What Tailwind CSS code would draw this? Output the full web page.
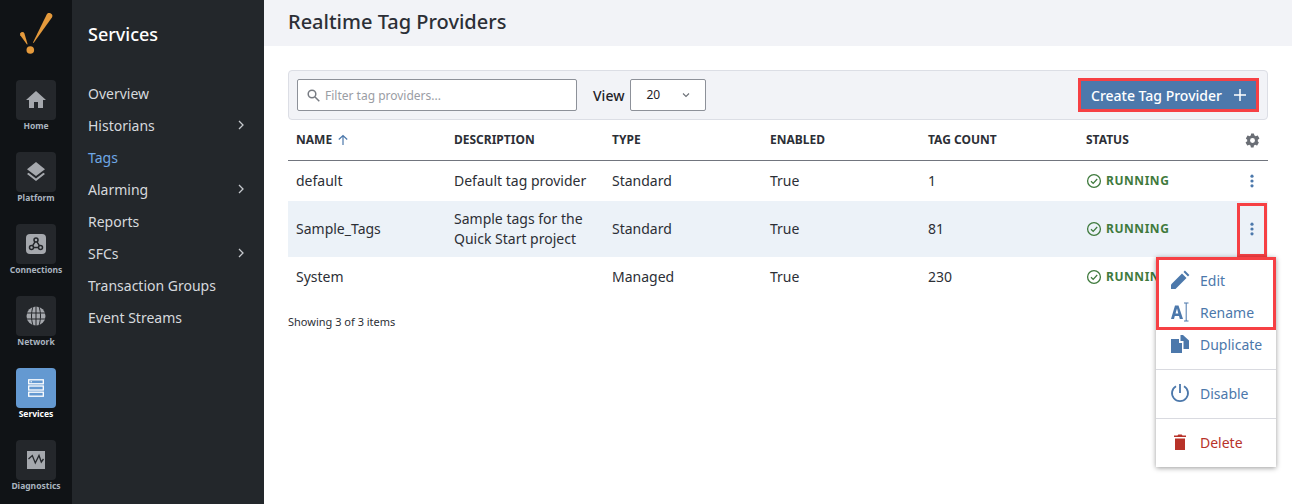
<!DOCTYPE html>
<html lang="en">
<head>
  <meta charset="UTF-8" />
  <title>Realtime Tag Providers</title>
  <script src="https://cdn.jsdelivr.net/npm/@tailwindcss/browser@4"></script>
</head>
<body class="w-[1292px] h-[504px] overflow-hidden bg-white font-['Noto_Sans',sans-serif] text-[14px] text-[#2c2f36]">
<div class="flex h-[504px]">

  <!-- Icon rail -->
  <nav class="w-[72px] shrink-0 bg-[#101316] flex flex-col items-center overflow-hidden">
    <svg class="mt-[13px] h-[42px] w-[36px] shrink-0" viewBox="0 0 36 42" fill="#e59a3c">
      <path d="M28.700 1.500A3 3 0 0 1 33.900 4.500L15.600 30 15 29.500z"/>
      <path d="M2.240 22.330A2.300 2.300 0 0 1 6.360 20.270L9.600 31.200 9 31.400z"/>
      <circle cx="12.300" cy="37" r="3.800"/>
    </svg>

    <div class="mt-[25px] flex h-10 w-10 items-center justify-center rounded-[4px] bg-[#24272b]">
      <svg class="h-6 w-6" viewBox="0 0 24 24" fill="#a5a8ad"><path d="M10 20v-6h4v6h5v-8h3L12 3 2 12h3v8z"/></svg>
    </div>
    <span class="-mt-[1px] h-[14px] text-[8.5px] leading-[14px] font-bold text-[#a9b3bf]">Home</span>

    <div class="mt-[19px] flex h-10 w-10 items-center justify-center rounded-[4px] bg-[#24272b]">
      <svg class="h-6 w-6" viewBox="0 0 24 24" fill="#a5a8ad"><path d="M12 2 3 9.200l9 6.900 9-6.900z"/><path d="m12 18.500-7.400-5.700L3 14l9 7 9-7-1.600-1.200z"/></svg>
    </div>
    <span class="-mt-[1px] h-[14px] text-[8.5px] leading-[14px] font-bold text-[#a9b3bf]">Platform</span>

    <div class="mt-[19px] flex h-10 w-10 items-center justify-center rounded-[4px] bg-[#24272b]">
      <svg class="h-[20px] w-[20px]" viewBox="0 0 20 20">
        <rect width="20" height="20" rx="4" fill="#a5a8ad"/>
        <g fill="none" stroke="#24272b" stroke-width="1.500"><circle cx="10" cy="6" r="2"/><circle cx="5.500" cy="13.500" r="2"/><circle cx="14.500" cy="13.500" r="2"/><path d="m9 7.800-2.500 4M11 7.800l2.500 4M7.500 13.500h5"/></g>
      </svg>
    </div>
    <span class="-mt-[1px] h-[14px] text-[8.5px] leading-[14px] font-bold text-[#a9b3bf]">Connections</span>

    <div class="mt-[19px] flex h-10 w-10 items-center justify-center rounded-[4px] bg-[#24272b]">
      <svg class="h-[20px] w-[20px]" viewBox="0 0 20 20" fill="none" stroke="#a5a8ad">
        <circle cx="10" cy="10" r="9.500" fill="#a5a8ad" stroke="none"/>
        <g stroke="#24272b" stroke-width="1"><path d="M1 7h18M1 13h18M7 .5C5 7 5 13 7 19.500M13 .5c2 6.500 2 12.500 0 19M10 0v20"/></g>
      </svg>
    </div>
    <span class="-mt-[1px] h-[14px] text-[8.5px] leading-[14px] font-bold text-[#a9b3bf]">Network</span>

    <div class="mt-[19px] flex h-10 w-10 items-center justify-center rounded-[4px] bg-[#6499d1]">
      <svg class="h-[18px] w-[16px]" viewBox="0 0 16 18" fill="none" stroke="#fff" stroke-width="1.300">
        <rect x=".7" y=".8" width="14.600" height="4"/><rect x=".7" y="7" width="14.600" height="4"/><rect x=".7" y="13.200" width="14.600" height="4"/>
        <path d="M2.500 2.800h1.500" stroke-width="1"/>
      </svg>
    </div>
    <span class="-mt-[1px] h-[14px] text-[8.5px] leading-[14px] font-bold text-white">Services</span>

    <div class="mt-[19px] flex h-10 w-10 shrink-0 items-center justify-center rounded-[4px] bg-[#24272b]">
      <svg class="h-[18px] w-[18px]" viewBox="0 0 18 18">
        <rect width="18" height="18" fill="#a5a8ad"/>
        <path d="M1.500 8 5.300 4.500 8.300 12 12 4.500 14.300 11 16.500 8" fill="none" stroke="#24272b" stroke-width="1.300"/>
      </svg>
    </div>
    <span class="-mt-[1px] h-[14px] text-[8.5px] leading-[14px] font-bold text-[#a9b3bf]">Diagnostics</span>
  </nav>

  <!-- Section menu -->
  <aside class="w-[192px] shrink-0 bg-[#23272b] pl-4 pr-[17px] text-[#d6d9dd]">
    <h2 class="mt-[21px] h-[26px] text-[18px] leading-[26px] font-medium text-white">Services</h2>
    <ul class="mt-[30px] flex flex-col">
      <li class="flex h-8 items-center">Overview</li>
      <li class="flex h-8 items-center justify-between">Historians
        <svg class="h-3 w-3" viewBox="0 0 12 12" fill="none" stroke="#c5c8cc" stroke-width="1.300"><path d="m4 2 4 4-4 4"/></svg>
      </li>
      <li class="flex h-8 items-center text-[#6ea8e6]">Tags</li>
      <li class="flex h-8 items-center justify-between">Alarming
        <svg class="h-3 w-3" viewBox="0 0 12 12" fill="none" stroke="#c5c8cc" stroke-width="1.300"><path d="m4 2 4 4-4 4"/></svg>
      </li>
      <li class="flex h-8 items-center">Reports</li>
      <li class="flex h-8 items-center justify-between">SFCs
        <svg class="h-3 w-3" viewBox="0 0 12 12" fill="none" stroke="#c5c8cc" stroke-width="1.300"><path d="m4 2 4 4-4 4"/></svg>
      </li>
      <li class="flex h-8 items-center">Transaction Groups</li>
      <li class="flex h-8 items-center">Event Streams</li>
    </ul>
  </aside>

  <!-- Main -->
  <main class="relative flex-1 min-w-0">
    <header class="flex h-[46px] items-center bg-[#f2f3f7] pl-6">
      <h1 class="text-[20px] leading-none font-medium text-[#2c2f36] -mt-[2px]">Realtime Tag Providers</h1>
    </header>

    <div class="mx-6 mt-[24px]">
      <!-- Toolbar -->
      <div class="flex h-[50px] items-center rounded-[4px] border border-[#dcdee5] bg-[#f2f3f7] pl-2 pr-2">
        <div class="flex h-[32px] w-[280px] items-center gap-[5px] rounded-[2px] border border-[#8d9199] bg-white pl-[9px]">
          <svg class="h-[13px] w-[13px]" viewBox="0 0 13 13" fill="none" stroke="#777b82" stroke-width="1.500"><circle cx="5" cy="5" r="3.800"/><path d="m8 8 4.300 4.300"/></svg>
          <span class="pt-[2px] text-[12px] text-[#9a9da4]">Filter tag providers...</span>
        </div>
        <span class="ml-4 text-[14px] font-medium text-[#1f2228]">View</span>
        <div class="ml-[6px] flex h-[32px] w-[76px] items-center justify-between rounded-[2px] border border-[#8d9199] bg-white pl-[15px] pr-[14px] text-[12px] text-[#1f2228]">
          20
          <svg class="h-[10px] w-[10px]" viewBox="0 0 10 10" fill="none" stroke="#6c7077" stroke-width="1.100"><path d="m2 3.500 3 3 3-3"/></svg>
        </div>
        <div class="ml-auto border-[3px] border-[#f64044]">
          <button class="flex h-7 w-[175px] items-center justify-between bg-[#4c78ab] pl-[10px] pr-[9px] text-[14px] font-medium text-white">
            Create Tag Provider
            <svg class="h-[14px] w-[14px]" viewBox="0 0 14 14" stroke="#fff" stroke-width="1.500"><path d="M7 1v12M1 7h12"/></svg>
          </button>
        </div>
      </div>

      <!-- Table -->
      <div class="grid h-[41px] grid-cols-[158px_158px_158px_158px_158px_1fr_32px] items-center border-b border-[#71757e] text-[12px] font-bold text-[#2c2f36]">
        <div class="flex items-center gap-[5px] pl-2">NAME
          <svg class="h-[12px] w-[12px]" viewBox="0 0 12 12" fill="none" stroke="#4c78ab" stroke-width="1.200"><path d="M6 11V1.500M1.800 5.500 6 1.500l4.200 4"/></svg>
        </div>
        <div class="pl-2">DESCRIPTION</div>
        <div class="pl-2">TYPE</div>
        <div class="pl-2">ENABLED</div>
        <div class="pl-2">TAG COUNT</div>
        <div class="pl-2">STATUS</div>
        <div class="flex justify-center">
          <svg class="h-[17px] w-[17px]" viewBox="0 0 24 24" fill="#6a6e75"><path d="M19.400 13c0-.3.100-.6.100-1s0-.7-.1-1l2.100-1.600c.2-.1.200-.4.100-.6l-2-3.500c-.1-.2-.4-.3-.6-.2l-2.500 1c-.5-.4-1.100-.7-1.700-1L14 2.400c0-.2-.2-.4-.5-.4h-3c-.2 0-.4.200-.5.400l-.4 2.700c-.6.200-1.100.6-1.700 1l-2.500-1c-.2-.1-.5 0-.6.200l-2 3.500c-.1.200-.1.500.1.600L4.600 11c0 .3-.1.700-.1 1s0 .7.100 1l-2.100 1.600c-.2.100-.2.400-.1.600l2 3.500c.1.200.4.300.6.200l2.500-1c.5.400 1.100.7 1.700 1l.4 2.700c0 .2.300.4.500.4h3c.2 0 .5-.2.500-.4l.4-2.700c.6-.2 1.100-.6 1.700-1l2.500 1c.2.100.5 0 .6-.2l2-3.500c.1-.2.100-.5-.1-.6zM12 15.500a3.500 3.500 0 1 1 0-7 3.500 3.500 0 0 1 0 7z"/></svg>
        </div>
      </div>

      <div class="grid h-[40px] grid-cols-[158px_158px_158px_158px_158px_1fr_32px] items-center pb-[2px]">
        <div class="pl-2">default</div>
        <div class="pl-2">Default tag provider</div>
        <div class="pl-2">Standard</div>
        <div class="pl-2">True</div>
        <div class="pl-2">1</div>
        <div class="flex items-center gap-1 pl-2 pt-[2px] text-[12px] font-bold tracking-[0.55px] text-[#3f7a3d]">
          <svg class="h-[16px] w-[16px]" viewBox="0 0 16 16" fill="none" stroke="#3f7a3d" stroke-width="1.300"><circle cx="8" cy="8" r="6.400"/><path d="m5 8.200 2.200 2.200L11.200 6"/></svg>
          RUNNING
        </div>
        <div class="flex justify-center pt-[2px]">
          <svg class="h-[14px] w-[4px]" viewBox="0 0 4 14" fill="#4c78ab"><circle cx="2" cy="2.200" r="1.600"/><circle cx="2" cy="7" r="1.600"/><circle cx="2" cy="11.800" r="1.600"/></svg>
        </div>
      </div>

      <div class="grid h-[56px] grid-cols-[158px_158px_158px_158px_158px_1fr_32px] items-center bg-[#ecf2f8] pb-[2px]">
        <div class="pl-2">Sample_Tags</div>
        <div class="pl-2 pt-[2px] leading-[20px]">Sample tags for the<br>Quick Start project</div>
        <div class="pl-2">Standard</div>
        <div class="pl-2">True</div>
        <div class="pl-2">81</div>
        <div class="flex items-center gap-1 pl-2 pt-[2px] text-[12px] font-bold tracking-[0.55px] text-[#3f7a3d]">
          <svg class="h-[16px] w-[16px]" viewBox="0 0 16 16" fill="none" stroke="#3f7a3d" stroke-width="1.300"><circle cx="8" cy="8" r="6.400"/><path d="m5 8.200 2.200 2.200L11.200 6"/></svg>
          RUNNING
        </div>
        <div class="mx-[1px] -mb-[2px] flex h-[54px] items-center justify-center self-end border-[3px] border-[#f64044]">
          <svg class="-mt-[2px] h-[14px] w-[4px]" viewBox="0 0 4 14" fill="#4c78ab"><circle cx="2" cy="2.200" r="1.600"/><circle cx="2" cy="7" r="1.600"/><circle cx="2" cy="11.800" r="1.600"/></svg>
        </div>
      </div>

      <div class="grid h-[40px] grid-cols-[158px_158px_158px_158px_158px_1fr_32px] items-center pb-[2px]">
        <div class="pl-2">System</div>
        <div class="pl-2"></div>
        <div class="pl-2">Managed</div>
        <div class="pl-2">True</div>
        <div class="pl-2">230</div>
        <div class="flex items-center gap-1 pl-2 pt-[2px] text-[12px] font-bold tracking-[0.55px] text-[#3f7a3d]">
          <svg class="h-[16px] w-[16px]" viewBox="0 0 16 16" fill="none" stroke="#3f7a3d" stroke-width="1.300"><circle cx="8" cy="8" r="6.400"/><path d="m5 8.200 2.200 2.200L11.200 6"/></svg>
          RUNNING
        </div>
      </div>

      <p class="mt-[16px] text-[11px] leading-[18px] text-[#2c2f36]">Showing 3 of 3 items</p>
    </div>

    <!-- Row action menu -->
    <div class="absolute left-[892px] top-[257px] w-[120px] bg-white text-[14px] text-[#4c78ab] shadow-[0_1px_5px_rgba(0,0,0,0.4)]">
      <div class="h-[73px] border-[3px] border-[#f64044] pt-[4px]">
        <div class="flex h-[32px] items-center gap-[10px] pl-[11px]">
          <svg class="h-[20px] w-[20px]" viewBox="0 0 20 20" fill="#4c78ab"><path d="M1 19v-4.500L12 3.500 16.500 8 5.500 19z"/><path d="m13.500 2 1.400-1.400 4.500 4.400L18 6.400z"/></svg>
          Edit
        </div>
        <div class="flex h-[32px] items-center gap-[10px] pl-[11px]">
          <svg class="h-[20px] w-[20px]" viewBox="0 0 20 20"><path d="M1 17 5 3.500h3.500L13 17h-3.200l-.8-3H4.800L4 17zm4.500-5.500h2.800L7 6.500z" fill="#4c78ab"/><path d="M14 1h4.500M14 19h4.500M16.200 1v18" fill="none" stroke="#4c78ab" stroke-width="1"/></svg>
          Rename
        </div>
      </div>
      <div class="-mt-[2px] flex h-[32px] items-center gap-[10px] pl-[14px]">
        <svg class="h-[20px] w-[20px]" viewBox="0 0 20 20" fill="#4c78ab"><path d="M1 5h8v4h3v10H1z"/><path d="M10.500 1h2.500l6 5.500V15h-5.500V7h-3z"/></svg>
        Duplicate
      </div>
      <div class="mt-[9px] border-t border-[#d9dae0]"></div>
      <div class="flex h-[48px] items-center gap-[10px] pb-[2px] pl-[14px]">
        <svg class="h-[20px] w-[20px]" viewBox="0 0 20 20" fill="none" stroke="#4c78ab" stroke-width="1.800"><path d="M6 3.200a8 8 0 1 0 8 0M10 1v9"/></svg>
        Disable
      </div>
      <div class="border-t border-[#d9dae0]"></div>
      <div class="flex h-[48px] items-center gap-[10px] pb-[2px] pl-[14px] text-[#b83229]">
        <svg class="h-[20px] w-[20px]" viewBox="0 0 20 20" fill="#b83229"><path d="M5 6.500h10V18H5z"/><path d="M4 3.500h3.500l.8-1h3.400l.8 1H16V5H4z"/></svg>
        Delete
      </div>
    </div>
  </main>
</div>
</body>
</html>
